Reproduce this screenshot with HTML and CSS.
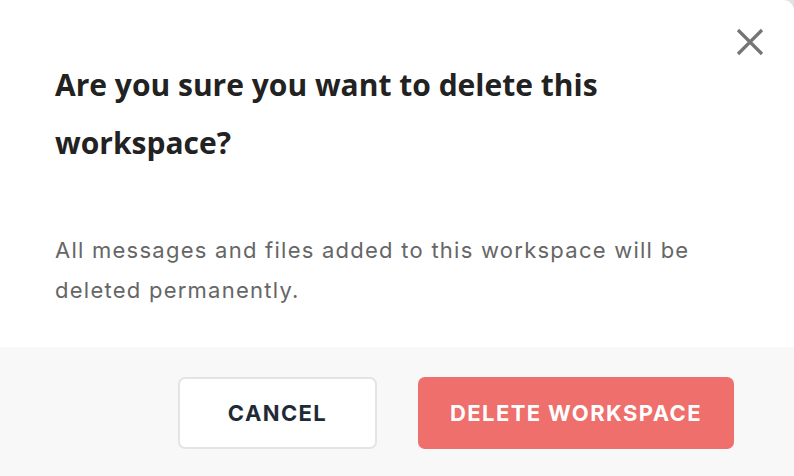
FILE: index.html
```html
<!DOCTYPE html>
<html lang="en">
<head>
<meta charset="utf-8">
<title>Delete workspace</title>
<link rel="stylesheet" href="styles.css">
</head>
<body>
<div class="dialog">
  <div class="dialog-body">
    <button class="close" aria-label="Close">
      <svg width="30" height="30" viewBox="0 0 30 30"><path d="M3 3 L27 27 M27 3 L3 27" stroke="#757575" stroke-width="3.2" stroke-linecap="butt" fill="none"/></svg>
    </button>
    <h1 class="title">Are you sure you want to delete this workspace?</h1>
    <p class="text">All messages and files added to this workspace will be deleted permanently.</p>
  </div>
  <div class="dialog-footer">
    <button class="btn btn-cancel">CANCEL</button>
    <button class="btn btn-delete">DELETE WORKSPACE</button>
  </div>
</div>
</body>
</html>
```

FILE: styles.css
```css
html, body {
  margin: 0;
  padding: 0;
  background: #e2e2e2;
}
.dialog {
  width: 794px;
  height: 476px;
  background: #ffffff;
  border-top-right-radius: 11px;
  overflow: hidden;
  display: flex;
  flex-direction: column;
}
.dialog-body {
  position: relative;
  height: 347px;
  box-sizing: border-box;
  padding: 56px 60px 0 55px;
}
.close {
  position: absolute;
  top: 27px;
  right: 29px;
  width: 30px;
  height: 30px;
  padding: 0;
  border: 0;
  background: none;
  cursor: pointer;
}
.close svg { display: block; }
.title {
  margin: 0;
  font-family: "Open Sans", sans-serif;
  font-weight: 700;
  font-size: 30px;
  line-height: 58px;
  color: #222222;
  width: 620px;
}
.text {
  margin: 58px 0 0 0;
  font-family: Inter, sans-serif;
  font-size: 22px;
  letter-spacing: 1.25px;
  line-height: 40px;
  color: #666666;
  width: 680px;
}
.dialog-footer {
  flex: 1;
  background: #f8f8f8;
  display: flex;
  justify-content: flex-end;
  align-items: flex-start;
  gap: 41px;
  padding: 30px 60px 0 0;
}
.btn {
  height: 72px;
  border-radius: 7px;
  font-family: Inter, sans-serif;
  font-weight: 700;
  font-size: 22px;
  letter-spacing: 1.4px;
  cursor: pointer;
  box-sizing: border-box;
}
.btn-cancel {
  width: 199px;
  background: #ffffff;
  border: 2px solid #e4e4e4;
  color: #1f2a37;
}
.btn-delete {
  width: 316px;
  background: #ee6f6c;
  border: 0;
  color: #ffffff;
}
```
